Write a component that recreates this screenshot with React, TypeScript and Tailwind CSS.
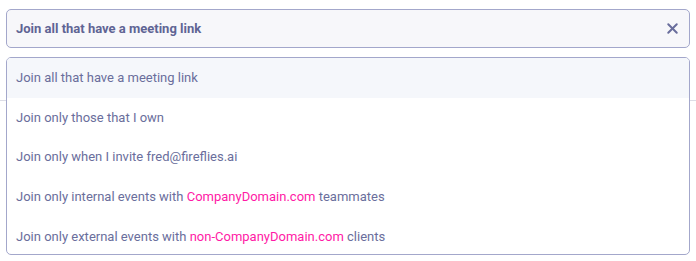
import { X } from "lucide-react";

const options: { id: string; parts: { text: string; accent?: boolean }[] }[] = [
  { id: "all", parts: [{ text: "Join all that have a meeting link" }] },
  { id: "own", parts: [{ text: "Join only those that I own" }] },
  { id: "invite", parts: [{ text: "Join only when I invite fred@fireflies.ai" }] },
  {
    id: "internal",
    parts: [
      { text: "Join only internal events with " },
      { text: "CompanyDomain.com", accent: true },
      { text: " teammates" },
    ],
  },
  {
    id: "external",
    parts: [
      { text: "Join only external events with " },
      { text: "non-CompanyDomain.com", accent: true },
      { text: " clients" },
    ],
  },
];

export default function App() {
  const selected = "all";
  return (
    <div className="relative h-[261px] w-[696px] bg-white font-['Roboto',sans-serif]">
      {/* divider of the page underneath the open menu */}
      <div className="absolute left-0 right-0 top-[100px] h-px bg-[#dcdde6]" />

      <div className="px-[6px] pt-[9px]">
        <div className="flex h-[39px] items-center justify-between rounded-[5px] border border-[#a3a7cb] bg-[#f7f7fa] pl-[9px] pr-[8px]">
          <span className="text-[13px] font-bold text-[#5f6494]">Join all that have a meeting link</span>
          <X className="h-[17px] w-[17px] text-[#6a6e9c]" strokeWidth={2.8} />
        </div>
      </div>

      {/* open menu, scrolled list clipped at its max height */}
      <div className="absolute left-[6px] right-[6px] top-[57px] h-[198px] overflow-hidden rounded-[5px] border border-[#a3a7cb] bg-white">
        {options.map((option) => (
          <div
            key={option.id}
            className={`flex h-[39.7px] items-center px-[9px] text-[13px] text-[#6a6e9c] ${
              option.id === selected ? "bg-[#f5f7fb]" : ""
            }`}
          >
            <span>
              {option.parts.map((part, index) => (
                <span key={index} className={part.accent ? "text-[#ff1aa6]" : undefined}>
                  {part.text}
                </span>
              ))}
            </span>
          </div>
        ))}
      </div>
    </div>
  );
}
